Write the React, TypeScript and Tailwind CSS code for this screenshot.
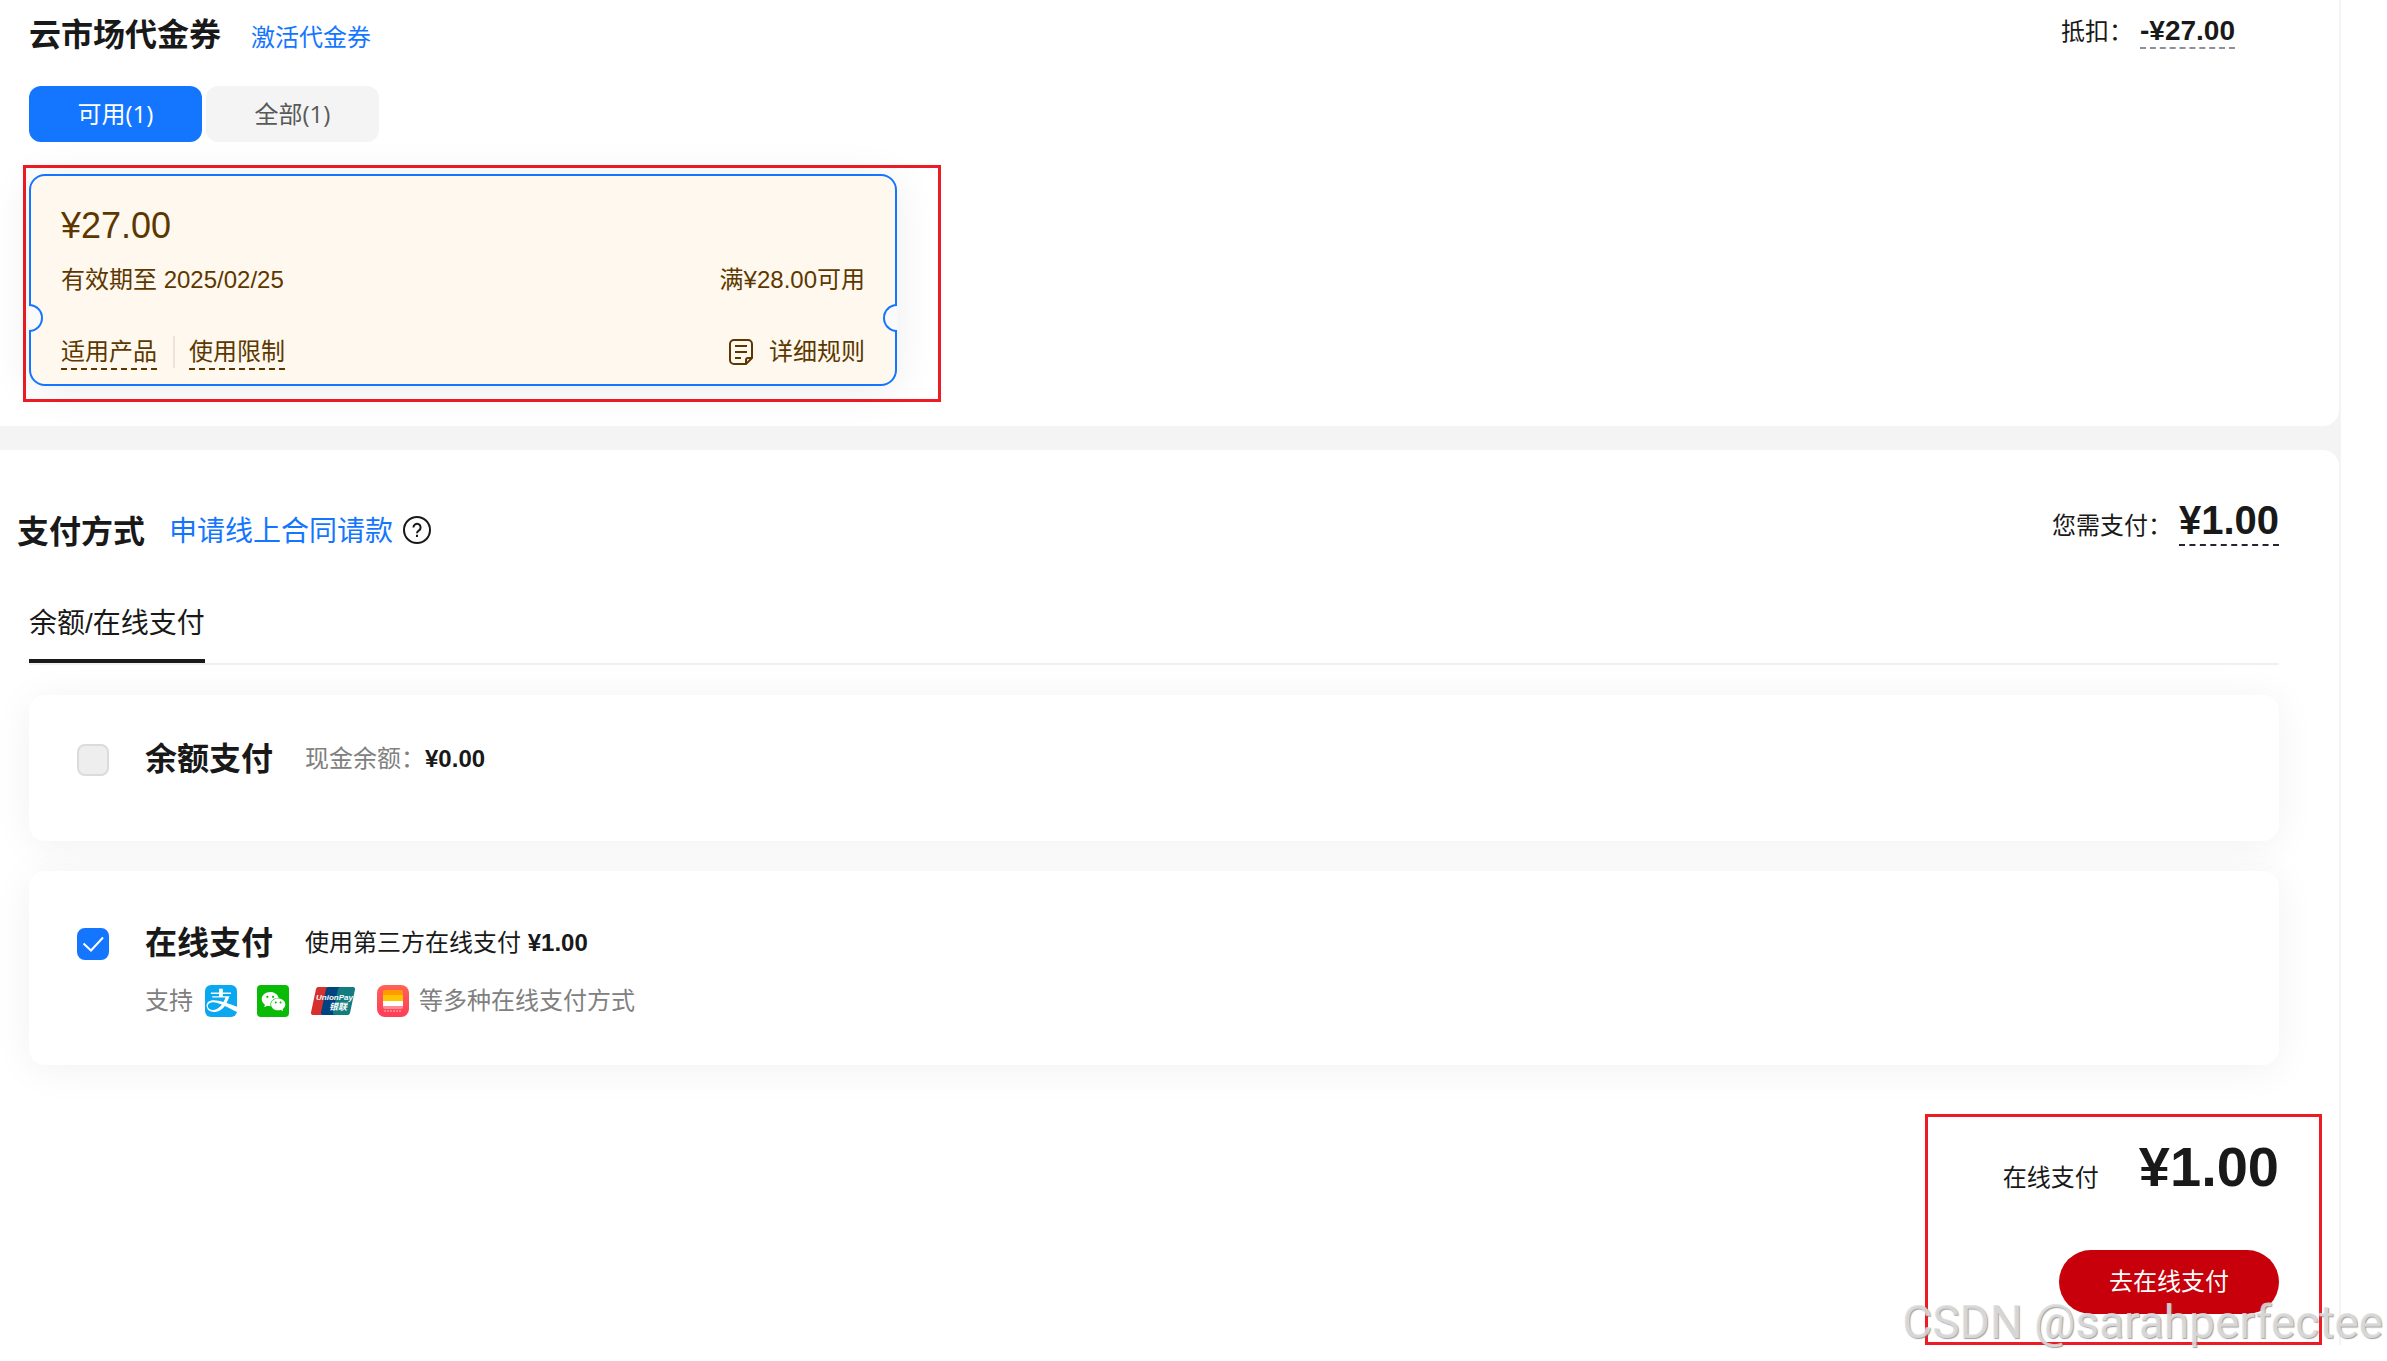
import { useState } from "react"
import type { ReactNode } from "react"
import { AiFillWechat } from "react-icons/ai"
import { FaAlipay } from "react-icons/fa"

const couponTabs = [
  { id: "usable", label: "可用(1)" },
  { id: "all", label: "全部(1)" },
]

function NoteIcon() {
  return (
    <svg viewBox="0 0 24 26" className="w-6 h-[26px]" fill="none" stroke="currentColor" strokeWidth="2" aria-hidden="true">
      <path d="M17 25H5a4 4 0 0 1-4-4V5a4 4 0 0 1 4-4h14a4 4 0 0 1 4 4v14z" strokeLinejoin="round" />
      <path d="M17 25v-4a2 2 0 0 1 2-2h4" />
      <path d="M6 7h12M6 13h12M6 19h6" />
    </svg>
  )
}

function HelpIcon() {
  return (
    <svg viewBox="0 0 28 28" className="w-7 h-7" fill="none" stroke="currentColor" strokeWidth="2" aria-hidden="true">
      <circle cx="14" cy="14" r="13" />
      <path d="M10.4 11.4a3.6 3.6 0 1 1 5.6 3c-1.3.8-2 1.4-2 2.8" />
      <path d="M14 18.8v2.2" />
    </svg>
  )
}

function AlipayLogo() {
  return (
    <span className="w-8 h-8 overflow-hidden rounded-md bg-white flex items-center justify-center">
      <FaAlipay className="w-9 h-[38px] shrink-0 text-[#0aa8f0]" />
    </span>
  )
}

function WechatLogo() {
  return (
    <span className="w-8 h-8 rounded-sm bg-[#09bb07] flex items-center justify-center">
      <AiFillWechat className="w-[27px] h-[27px] text-white" />
    </span>
  )
}

function UnionPayLogo() {
  return (
    <svg viewBox="0 0 44 28" className="w-11 h-7" aria-label="UnionPay">
      <path d="M7 0h13l-6 28H2a2 2 0 0 1-2-2.500L5 2a2.500 2.500 0 0 1 2-2z" fill="#d5322f" />
      <path d="M17 0h13l-6 28H12a2 2 0 0 1-2-2.500L15 2a2.500 2.500 0 0 1 2-2z" fill="#01437f" />
      <path d="M29 0h13a2 2 0 0 1 2 2.500L39 26a2.500 2.500 0 0 1-2 2H24a2 2 0 0 1-2-2.500L27 2a2.500 2.500 0 0 1 2-2z" fill="#127c80" />
      <text x="5" y="13" fontSize="8" fontWeight="700" fontStyle="italic" fontFamily="Liberation Sans, sans-serif" fill="#fff">
        UnionPay
      </text>
      <text x="18" y="23" fontSize="9" fontWeight="700" fontStyle="italic" fontFamily="Noto Sans CJK SC, sans-serif" fill="#fff">
        银联
      </text>
    </svg>
  )
}

function HuaweiPayLogo() {
  return (
    <svg viewBox="0 0 32 32" className="w-8 h-8" aria-hidden="true">
      <defs>
        <linearGradient id="wallet" x1="0" y1="0" x2="0" y2="1">
          <stop offset="0" stopColor="#ff6257" />
          <stop offset="1" stopColor="#ff3d57" />
        </linearGradient>
      </defs>
      <rect width="32" height="32" rx="8" fill="url(#wallet)" />
      <path d="M8 5h16a2 2 0 0 1 2 2v4H6V7a2 2 0 0 1 2-2z" fill="#ff9a00" />
      <rect x="6" y="10" width="20" height="6" fill="#ffc400" />
      <rect x="6" y="16" width="20" height="5" fill="#fff" />
      <path d="M6 21h20v1a2 2 0 0 1-2 2H8a2 2 0 0 1-2-2z" fill="#ff8a94" />
      <path d="M7 26h18" stroke="#ff7f8b" strokeWidth="2" strokeDasharray="2 1" />
    </svg>
  )
}

function Coupon() {
  return (
    <div className="relative border-2 border-[#1476ff] rounded-2xl bg-[#fff8ee] text-[#5c3800] px-[30px] pt-[30px] pb-[14px] shadow-[0_4px_40px_rgba(0,0,0,0.08)]">
      <span className="absolute -left-[2px] top-[128px] w-[14px] h-7 rounded-r-full border-2 border-l-0 border-[#1476ff] bg-[#fafafa]" />
      <span className="absolute -right-[2px] top-[128px] w-[14px] h-7 rounded-l-full border-2 border-r-0 border-[#1476ff] bg-[#fafafa]" />
      <p className="text-[36px] leading-10">¥27.00</p>
      <div className="flex justify-between mt-[18px]">
        <span>有效期至 2025/02/25</span>
        <span>满¥28.00可用</span>
      </div>
      <div className="flex justify-between items-start mt-10">
        <div className="flex">
          <a href="#products" className="border-b-2 border-dashed border-current">适用产品</a>
          <span className="w-[2px] h-8 ml-4 mr-[14px] bg-[#eee3d6]" />
          <a href="#limits" className="border-b-2 border-dashed border-current">使用限制</a>
        </div>
        <button type="button" className="flex items-center gap-4">
          <NoteIcon />
          详细规则
        </button>
      </div>
    </div>
  )
}

type PayOptionProps = {
  id: string
  title: string
  checked?: boolean
  disabled?: boolean
  onChange?: (checked: boolean) => void
  note: ReactNode
  className: string
  children?: ReactNode
}

function PayOption({ id, title, checked, disabled, onChange, note, className, children }: PayOptionProps) {
  return (
    <div className={`flex items-start pl-12 rounded-2xl bg-white shadow-[0_4px_40px_rgba(0,0,0,0.06)] ${className}`}>
      <span className="relative w-8 h-8 mt-[5px] mr-9 shrink-0">
        <input
          id={id}
          type="checkbox"
          checked={checked}
          disabled={disabled}
          onChange={(e) => onChange?.(e.target.checked)}
          className="block w-8 h-8 appearance-none rounded-lg border-2 border-[#dbdbdb] bg-[#eeeeee] checked:border-[#1476ff] checked:bg-[#1476ff]"
        />
        {checked && (
          <svg viewBox="0 0 32 32" className="absolute inset-0 w-8 h-8 pointer-events-none" fill="none" stroke="#fff" strokeWidth="2">
            <path d="M6.500 15.500l7.500 7L26 9.500" />
          </svg>
        )}
      </span>
      <div>
        <div className="flex items-center gap-8 leading-10">
          <label htmlFor={id} className="text-[32px] font-bold">{title}</label>
          <p>{note}</p>
        </div>
        {children}
      </div>
    </div>
  )
}

export default function App() {
  const [tab, setTab] = useState("usable")
  const [online, setOnline] = useState(true)

  return (
    <div className="relative min-h-screen overflow-hidden bg-white text-[#191919] text-2xl leading-8 font-['Liberation_Sans','Noto_Sans_CJK_SC',sans-serif] pb-12">
      <div className="mr-[46px] pr-[2px] bg-[#f4f4f4]">
        <section className="bg-white rounded-br-2xl pt-[15px] pb-6">
          <div className="flex justify-between items-start pl-[29px] pr-[104px]">
            <div className="flex items-baseline gap-[30px]">
              <h2 className="text-[32px] leading-10 font-bold">云市场代金券</h2>
              <a href="#activate" className="text-[#1476ff]">激活代金券</a>
            </div>
            <div className="flex items-baseline gap-[7px]">
              <span>抵扣：</span>
              <span className="text-[28px] leading-8 font-bold border-b-2 border-dashed border-[#8f8f9c]">-¥27.00</span>
            </div>
          </div>

          <div className="flex gap-1 pl-[29px] mt-[31px] font-['Open_Sans','Noto_Sans_CJK_SC',sans-serif]">
            {couponTabs.map((item) => (
              <button
                key={item.id}
                type="button"
                onClick={() => setTab(item.id)}
                className={`w-[173px] h-14 rounded-xl ${tab === item.id ? "bg-[#1476ff] text-white" : "bg-[#f4f4f4] text-[#595959]"}`}
              >
                {item.label}
              </button>
            ))}
          </div>

          <div className="w-[918px] max-w-full ml-[23px] mt-[23px] border-[3px] border-[#ed1c24] pt-[6px] pl-[3px] pr-[41px] pb-[13px]">
            <Coupon />
          </div>
        </section>

        <section className="bg-white rounded-tr-2xl mt-6 pt-[46px]">
          <div className="flex justify-between items-start h-14 pl-[17px] pr-[60px]">
            <div className="flex items-start mt-4">
              <h2 className="text-[32px] leading-10 font-bold">支付方式</h2>
              <a href="#contract" className="text-[28px] leading-10 ml-6 mr-[10px] text-[#1476ff]">申请线上合同请款</a>
              <button type="button" aria-label="帮助" className="mt-1">
                <HelpIcon />
              </button>
            </div>
            <div className="flex items-baseline gap-[7px]">
              <span>您需支付：</span>
              <span className="text-[40px] leading-[48px] font-bold border-b-2 border-dashed border-[#252532]">¥1.00</span>
            </div>
          </div>

          <div className="ml-[29px] mr-[60px]">
            <div className="flex mt-[52px] border-b-2 border-[#f0f0f0]">
              <button type="button" className="text-[28px] leading-10 pb-[15px] border-b-4 border-[#191919]">余额/在线支付</button>
            </div>

            <PayOption
              id="balance"
              title="余额支付"
              disabled
              className="mt-[30px] pt-11 pb-[62px]"
              note={
                <>
                  <span className="text-[#808080]">现金余额：</span>
                  <b>¥0.00</b>
                </>
              }
            />
            <PayOption
              id="online"
              title="在线支付"
              checked={online}
              onChange={setOnline}
              className="mt-[30px] pt-[52px] pb-12"
              note={
                <>
                  使用第三方在线支付 <b>¥1.00</b>
                </>
              }
            >
              <div className="flex items-center mt-[22px] text-[#808080]">
                <span className="mr-3">支持</span>
                <AlipayLogo />
                <span className="w-5" />
                <WechatLogo />
                <span className="w-[22px]" />
                <UnionPayLogo />
                <span className="w-[22px]" />
                <HuaweiPayLogo />
                <span className="ml-[10px]">等多种在线支付方式</span>
              </div>
            </PayOption>
          </div>

          {/* the frame hangs below the end of the panel */}
          <div className="flex flex-col items-end w-[397px] ml-auto mr-[17px] mt-[49px] -mb-[31px] border-[3px] border-[#ed1c24] pt-[18px] pr-10 pb-7">
            <div className="flex items-baseline gap-10">
              <span>在线支付</span>
              <span className="text-[56px] leading-[64px] font-bold">¥1.00</span>
            </div>
            <button type="button" className="w-[220px] h-16 mt-[51px] rounded-full bg-[#c7000b] text-white">去在线支付</button>
          </div>
        </section>
      </div>

      <span className="absolute right-1 bottom-3 text-[46px] leading-[56px] text-[#e0e0e0]/85 font-['Roboto',sans-serif] [text-shadow:1px_1px_1px_rgba(120,120,120,0.7)] pointer-events-none">
        CSDN @sarahperfectee
      </span>
    </div>
  )
}
